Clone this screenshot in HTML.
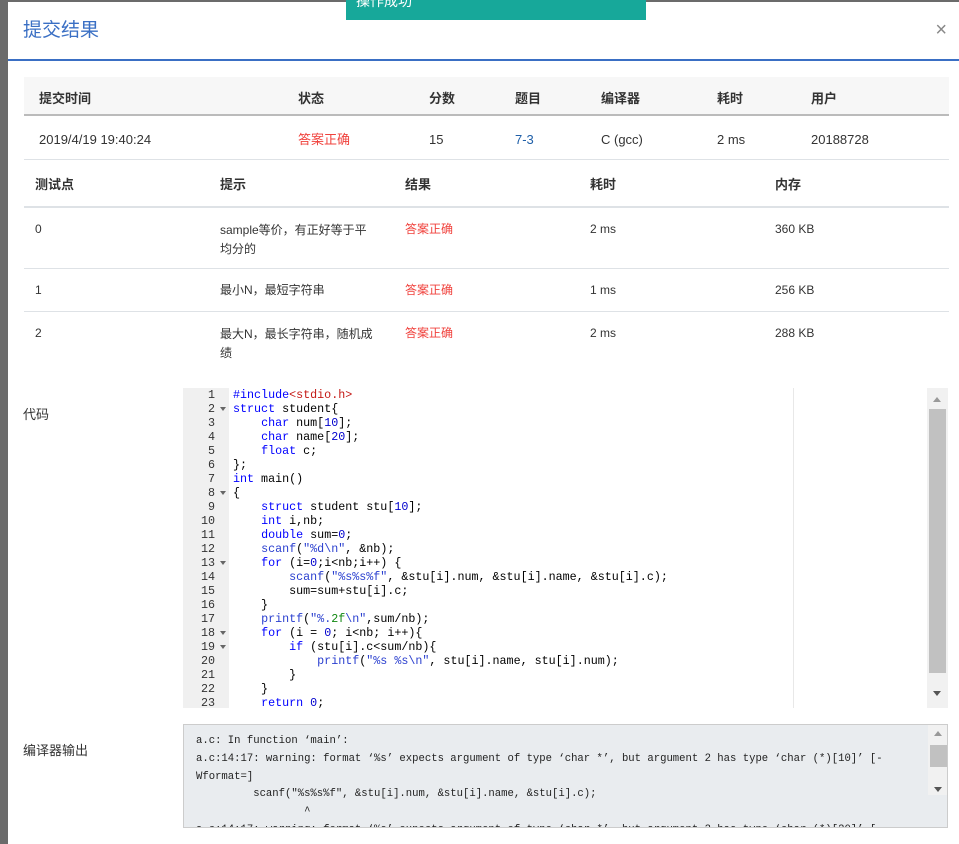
<!DOCTYPE html>
<html><head><meta charset="utf-8">
<style>
*{box-sizing:border-box;margin:0;padding:0}
body{width:959px;height:844px;overflow:hidden;background:#6b6b6b;font-family:"Liberation Sans","Noto Sans CJK SC",sans-serif;position:relative;color:#333}
.modal{position:absolute;left:8px;top:2px;right:0;bottom:0;background:#fff}
.title{position:absolute;left:15px;top:18px;font-size:19px;line-height:22px;color:#3a6fc4}
.close{position:absolute;right:12px;top:17px;font-size:20px;line-height:22px;color:#888}
.hr{position:absolute;left:0;right:0;top:57px;height:2px;background:#3a6fc4}
.abs{position:absolute;white-space:nowrap;font-size:13px;line-height:16px}
.th{font-weight:bold;color:#333}
.red{color:#f0413c}
.toast{position:absolute;left:346px;top:0;width:300px;height:20px;background:#17a89a;color:#fff;font-size:14px;overflow:hidden}
.toast span{position:absolute;left:10px;top:-9px}
.editor{position:absolute;left:183px;top:388px;width:765px;height:320px;background:#fff;overflow:hidden;font-family:"Liberation Mono",monospace;font-size:11.7px;line-height:14px}
.gutter{position:absolute;left:0;top:0;width:46px;height:320px;background:#f0f0f0}
.ln{position:absolute;left:0;width:32px;text-align:right;color:#333}
.cl{position:absolute;left:50px;white-space:pre;color:#000}
.k{color:#0000ff}.s{color:#2a3fcf}.n{color:#0000cd}.r{color:#c41a16}.g{color:#118811}
.pm{position:absolute;left:610px;top:0;width:1px;height:320px;background:#e8e8e8}
.sb{position:absolute;left:744px;top:0;width:21px;height:320px;background:#f1f1f1}
.thumb{position:absolute;left:2px;top:21px;width:17px;height:264px;background:#c1c1c1}
.out{position:absolute;left:183px;top:724px;width:765px;height:104px;background:#e9ecef;border:1px solid #ccc;overflow:hidden;font-family:"Liberation Mono",monospace;font-size:10.6px;color:#222}
.out div{position:absolute;left:12px;white-space:pre}
</style></head><body>
<div class="modal">
<div class="title">提交结果</div>
<div class="close">×</div>
<div class="hr"></div>
<div style="position:absolute;left:16px;top:75px;width:925px;height:39px;background:#f7f7f7;border-bottom:2px solid #bbb"></div>
<div style="position:absolute;left:16px;top:157px;width:925px;height:1px;background:#dee2e6"></div>
<div class="abs th" style="left:31px;top:89px">提交时间</div>
<div class="abs th" style="left:290px;top:89px">状态</div>
<div class="abs th" style="left:421px;top:89px">分数</div>
<div class="abs th" style="left:507px;top:89px">题目</div>
<div class="abs th" style="left:593px;top:89px">编译器</div>
<div class="abs th" style="left:709px;top:89px">耗时</div>
<div class="abs th" style="left:803px;top:89px">用户</div>
<div class="abs" style="left:31px;top:130px">2019/4/19 19:40:24</div>
<div class="abs red" style="left:290px;top:130px">答案正确</div>
<div class="abs" style="left:421px;top:130px">15</div>
<div class="abs" style="left:507px;top:130px;color:#1f5fa8">7-3</div>
<div class="abs" style="left:593px;top:130px">C (gcc)</div>
<div class="abs" style="left:709px;top:130px">2 ms</div>
<div class="abs" style="left:803px;top:130px">20188728</div>

<div style="position:absolute;left:16px;top:204px;width:925px;height:2px;background:#dee2e6"></div>
<div style="position:absolute;left:16px;top:266px;width:925px;height:1px;background:#dee2e6"></div>
<div style="position:absolute;left:16px;top:309px;width:925px;height:1px;background:#dee2e6"></div>
<div class="abs th" style="left:27px;top:175px">测试点</div>
<div class="abs th" style="left:212px;top:175px">提示</div>
<div class="abs th" style="left:397px;top:175px">结果</div>
<div class="abs th" style="left:582px;top:175px">耗时</div>
<div class="abs th" style="left:767px;top:175px">内存</div>
<div class="abs" style="left:27px;top:219px;font-size:12px">0</div>
<div class="abs" style="left:212px;top:219px;font-size:12px;line-height:19px">sample等价，有正好等于平<br>均分的</div>
<div class="abs red" style="left:397px;top:219px;font-size:12px">答案正确</div>
<div class="abs" style="left:582px;top:219px;font-size:12px">2 ms</div>
<div class="abs" style="left:767px;top:219px;font-size:12px">360 KB</div>
<div class="abs" style="left:27px;top:280px;font-size:12px">1</div>
<div class="abs" style="left:212px;top:280px;font-size:12px">最小N，最短字符串</div>
<div class="abs red" style="left:397px;top:280px;font-size:12px">答案正确</div>
<div class="abs" style="left:582px;top:280px;font-size:12px">1 ms</div>
<div class="abs" style="left:767px;top:280px;font-size:12px">256 KB</div>
<div class="abs" style="left:27px;top:323px;font-size:12px">2</div>
<div class="abs" style="left:212px;top:323px;font-size:12px;line-height:19px">最大N，最长字符串，随机成<br>绩</div>
<div class="abs red" style="left:397px;top:323px;font-size:12px">答案正确</div>
<div class="abs" style="left:582px;top:323px;font-size:12px">2 ms</div>
<div class="abs" style="left:767px;top:323px;font-size:12px">288 KB</div>

<div class="abs" style="left:15px;top:405px">代码</div>
<div class="abs" style="left:15px;top:741px">编译器输出</div>
</div>

<div class="editor">
<div class="gutter"></div>
<div class="pm"></div>
<div id="code"></div>
<div class="sb"><div style="position:absolute;left:6px;top:9px;border:4px solid transparent;border-bottom:5px solid #999;border-top:0;width:0"></div><div class="thumb"></div><div style="position:absolute;left:6px;top:303px;border:4px solid transparent;border-top:5px solid #555;border-bottom:0;width:0"></div></div>
</div>

<div class="out">
<div style="top:10px">a.c: In function ‘main’:</div>
<div style="top:28px">a.c:14:17: warning: format ‘%s’ expects argument of type ‘char *’, but argument 2 has type ‘char (*)[10]’ [-</div>
<div style="top:46px">Wformat=]</div>
<div style="top:63px">         scanf("%s%s%f", &amp;stu[i].num, &amp;stu[i].name, &amp;stu[i].c);</div>
<div style="top:81px">                 ^</div>
<div style="top:99px">a.c:14:17: warning: format ‘%s’ expects argument of type ‘char *’, but argument 3 has type ‘char (*)[20]’ [-</div>
<div style="position:absolute;left:744px;top:0;width:21px;height:70px;background:#f1f1f1"><div style="position:absolute;left:6px;top:6px;border:4px solid transparent;border-bottom:5px solid #999;border-top:0;width:0"></div><div style="position:absolute;left:2px;top:20px;width:17px;height:22px;background:#c1c1c1"></div><div style="position:absolute;left:6px;top:62px;border:4px solid transparent;border-top:5px solid #555;border-bottom:0;width:0"></div></div>
</div>

<div class="toast"><span>操作成功</span></div>

<script>
var L=[
'<span class="k">#include</span><span class="r">&lt;stdio.h&gt;</span>',
'<span class="k">struct</span> student{',
'    <span class="k">char</span> num[<span class="n">10</span>];',
'    <span class="k">char</span> name[<span class="n">20</span>];',
'    <span class="k">float</span> c;',
'};',
'<span class="k">int</span> main()',
'{',
'    <span class="k">struct</span> student stu[<span class="n">10</span>];',
'    <span class="k">int</span> i,nb;',
'    <span class="k">double</span> sum=<span class="n">0</span>;',
'    <span class="s">scanf</span>(<span class="s">"%d\\n"</span>, &amp;nb);',
'    <span class="k">for</span> (i=<span class="n">0</span>;i&lt;nb;i++) {',
'        <span class="s">scanf</span>(<span class="s">"%s%s%f"</span>, &amp;stu[i].num, &amp;stu[i].name, &amp;stu[i].c);',
'        sum=sum+stu[i].c;',
'    }',
'    <span class="s">printf</span>(<span class="s">"%.</span><span class="g">2f</span><span class="s">\\n"</span>,sum/nb);',
'    <span class="k">for</span> (i = <span class="n">0</span>; i&lt;nb; i++){',
'        <span class="k">if</span> (stu[i].c&lt;sum/nb){',
'            <span class="s">printf</span>(<span class="s">"%s %s\\n"</span>, stu[i].name, stu[i].num);',
'        }',
'    }',
'    <span class="k">return</span> <span class="n">0</span>;'];
var fold={2:1,8:1,13:1,18:1,19:1},h='';
for(var i=0;i<L.length;i++){var t=i*14;
h+='<div class="ln" style="top:'+t+'px">'+(i+1)+'</div>';
if(fold[i+1])h+='<div style="position:absolute;left:37px;top:'+(t+5)+'px;border:3px solid transparent;border-top:4px solid #666;border-bottom:0"></div>';
h+='<div class="cl" style="top:'+t+'px">'+L[i]+'</div>';}
document.getElementById('code').innerHTML=h;
</script>
</body></html>
